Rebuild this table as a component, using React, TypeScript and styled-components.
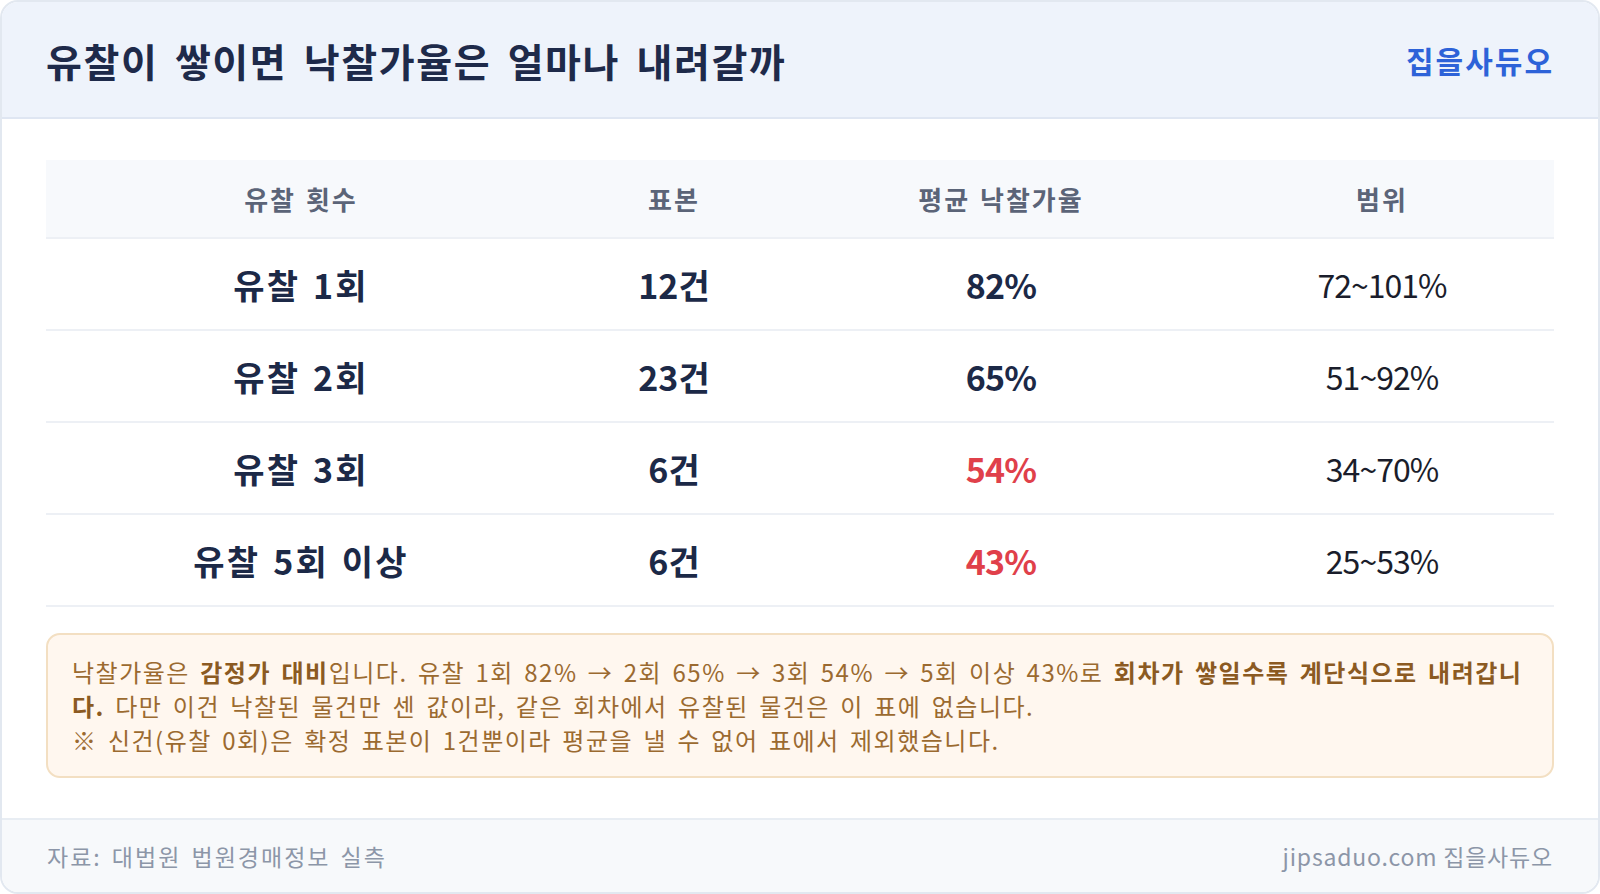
import styled, { createGlobalStyle } from "styled-components";

const GlobalStyle = createGlobalStyle`
  html, body {
    margin: 0;
    padding: 0;
    background: #ffffff;
  }
  * {
    box-sizing: border-box;
  }
`;

type Row = {
  label: string;
  count: string;
  rate: string;
  range: string;
  warn?: boolean;
};

const rows: Row[] = [
  { label: "유찰 1회", count: "12건", rate: "82%", range: "72~101%" },
  { label: "유찰 2회", count: "23건", rate: "65%", range: "51~92%" },
  { label: "유찰 3회", count: "6건", rate: "54%", range: "34~70%", warn: true },
  { label: "유찰 5회 이상", count: "6건", rate: "43%", range: "25~53%", warn: true },
];

const App = () => {
  return (
    <Card>
      <GlobalStyle />
      <Header>
        <Title>유찰이 쌓이면 낙찰가율은 얼마나 내려갈까</Title>
        <Brand>집을사듀오</Brand>
      </Header>
      <Body>
        <Table>
          <HeadRow>
            <HeadCell>유찰 횟수</HeadCell>
            <HeadCell>표본</HeadCell>
            <HeadCell>평균 낙찰가율</HeadCell>
            <HeadCell>범위</HeadCell>
          </HeadRow>
          {rows.map((r) => (
            <DataRow key={r.label}>
              <LabelCell>{r.label}</LabelCell>
              <StrongCell>{r.count}</StrongCell>
              <RateCell $warn={r.warn}>{r.rate}</RateCell>
              <PlainCell>{r.range}</PlainCell>
            </DataRow>
          ))}
        </Table>
        <Note>
          낙찰가율은 <b>감정가 대비</b>입니다. 유찰 1회 82% → 2회 65% → 3회 54% → 5회 이상 43%로{" "}
          <b>회차가 쌓일수록 계단식으로 내려갑니다.</b> 다만 이건 낙찰된 물건만 센 값이라, 같은
          회차에서 유찰된 물건은 이 표에 없습니다.
          <br />※ 신건(유찰 0회)은 확정 표본이 1건뿐이라 평균을 낼 수 없어 표에서 제외했습니다.
        </Note>
      </Body>
      <Footer>
        <Source>자료: 대법원 법원경매정보 실측</Source>
        <Site>jipsaduo.com 집을사듀오</Site>
      </Footer>
    </Card>
  );
};

export default App;

const Card = styled.div`
  width: 100vw;
  height: 100vh;
  display: flex;
  flex-direction: column;
  border: 2px solid #e2e8f0;
  border-radius: 18px;
  overflow: hidden;
  background: #ffffff;
  font-family: "Noto Sans CJK KR", "Noto Sans", sans-serif;
`;

const Header = styled.header`
  height: 117px;
  flex-shrink: 0;
  display: flex;
  align-items: center;
  justify-content: space-between;
  padding: 0 46px 0 44px;
  background: #eef3fb;
  border-bottom: 2px solid #dfe6f2;
`;

const Title = styled.h1`
  margin: 0;
  font-size: 39px;
  font-weight: 700;
  letter-spacing: 1.6px;
  word-spacing: 6px;
  color: #1e2a4a;
`;

const Brand = styled.div`
  font-size: 30px;
  font-weight: 700;
  letter-spacing: 2px;
  margin-right: -2px;
  color: #2d62d8;
`;

const Body = styled.main`
  flex: 1;
  padding: 41px 44px 0;
`;

const Table = styled.div`
  display: flex;
  flex-direction: column;
`;

const grid = `
  display: grid;
  grid-template-columns: 510fr 236fr 418fr 344fr;
  align-items: center;
  text-align: center;
  border-bottom: 2px solid #edf0f5;
`;

const HeadRow = styled.div`
  ${grid};
  height: 79px;
  background: #f7f9fc;
`;

const HeadCell = styled.div`
  font-size: 26px;
  font-weight: 700;
  letter-spacing: 2px;
  word-spacing: 2px;
  color: #5b6478;
`;

const DataRow = styled.div`
  ${grid};
  height: 92px;
`;

const StrongCell = styled.div`
  font-size: 34px;
  font-weight: 700;
  color: #1c2947;
`;

const LabelCell = styled(StrongCell)`
  letter-spacing: 2.2px;
  word-spacing: 3px;
`;

const RateCell = styled(StrongCell)<{ $warn?: boolean }>`
  letter-spacing: -0.8px;
  color: ${(p) => (p.$warn ? "#e0404a" : "#1c2947")};
`;

const PlainCell = styled.div`
  font-size: 32px;
  font-weight: 400;
  letter-spacing: -1px;
  color: #1a1d2b;
`;

const Note = styled.div`
  margin-top: 26px;
  padding: 20px 24px 19px;
  background: #fff7ef;
  border: 2px solid #f3dfc2;
  border-radius: 14px;
  font-size: 24px;
  line-height: 34px;
  letter-spacing: 1.5px;
  word-spacing: 3.5px;
  color: #9b6a30;

  b {
    font-weight: 700;
    color: #8b5a22;
  }
`;

const Footer = styled.footer`
  height: 74px;
  flex-shrink: 0;
  display: flex;
  align-items: center;
  justify-content: space-between;
  padding: 0 46px 0 45px;
  background: #f7f9fb;
  border-top: 2px solid #e8edf3;
  font-size: 23px;
  color: #8c96a8;
`;

const Source = styled.span`
  letter-spacing: 2px;
  word-spacing: 3px;
`;

const Site = styled.span`
  letter-spacing: 0.8px;
  margin-right: -1px;
`;
